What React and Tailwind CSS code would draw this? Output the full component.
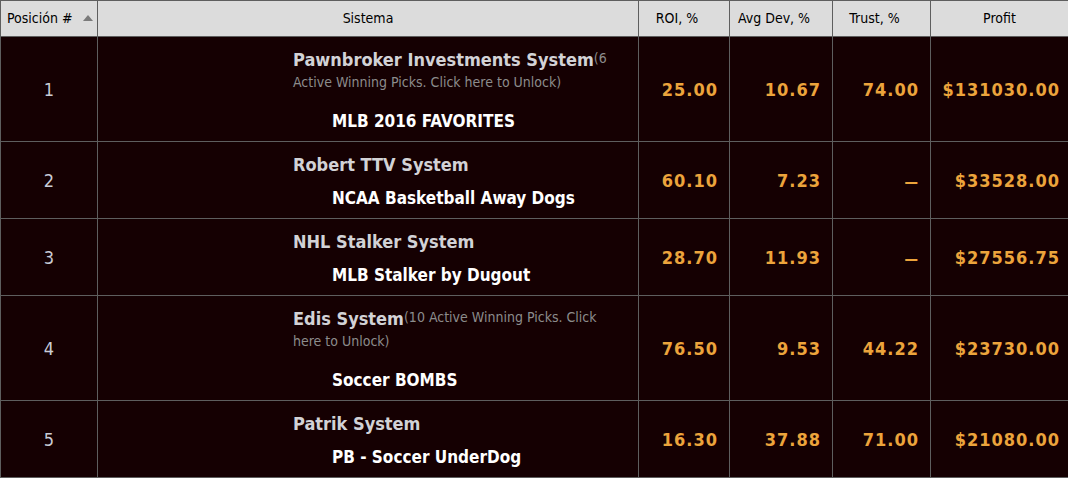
import React from "react";

const rows = [
  {
    pos: 1,
    name: "Pawnbroker Investments System",
    note: "(6 Active Winning Picks. Click here to Unlock)",
    sub: "MLB 2016 FAVORITES",
    roi: "25.00",
    dev: "10.67",
    trust: "74.00",
    profit: "$131030.00",
  },
  {
    pos: 2,
    name: "Robert TTV System",
    sub: "NCAA Basketball Away Dogs",
    roi: "60.10",
    dev: "7.23",
    trust: null,
    profit: "$33528.00",
  },
  {
    pos: 3,
    name: "NHL Stalker System",
    sub: "MLB Stalker by Dugout",
    roi: "28.70",
    dev: "11.93",
    trust: null,
    profit: "$27556.75",
  },
  {
    pos: 4,
    name: "Edis System",
    note: "(10 Active Winning Picks. Click here to Unlock)",
    sub: "Soccer BOMBS",
    roi: "76.50",
    dev: "9.53",
    trust: "44.22",
    profit: "$23730.00",
  },
  {
    pos: 5,
    name: "Patrik System",
    sub: "PB - Soccer UnderDog",
    roi: "16.30",
    dev: "37.88",
    trust: "71.00",
    profit: "$21080.00",
  },
];

const numCell = "border border-[#5e5e5e] text-right font-bold text-[#eca43c] tracking-[1px]";

export default function App() {
  return (
    <div
      className="w-[1068px] h-[478px] bg-[#150002] overflow-hidden"
      style={{ fontFamily: '"DejaVu Sans Condensed", "DejaVu Sans", sans-serif' }}
    >
      <table className="w-[1068px] border-collapse table-fixed">
        <colgroup>
          <col className="w-[97px]" />
          <col className="w-[541px]" />
          <col className="w-[91px]" />
          <col className="w-[103px]" />
          <col className="w-[98px]" />
          <col className="w-[138px]" />
        </colgroup>
        <thead>
          <tr className="h-[36px] bg-[#dcdcdc] text-[14px] text-black">
            <th className="border border-[#5e5e5e] text-left font-normal pl-[6px]">
              <span>Posición #</span>
              <span className="ml-[10px] inline-block align-middle w-0 h-0 border-l-[5px] border-r-[5px] border-b-[6px] border-l-transparent border-r-transparent border-b-[#7a7a7a] -mt-[3px]" />
            </th>
            <th className="border border-[#5e5e5e] font-normal">Sistema</th>
            <th className="border border-[#5e5e5e] font-normal pr-[14px]">ROI, %</th>
            <th className="border border-[#5e5e5e] font-normal pr-[14px]">Avg Dev, %</th>
            <th className="border border-[#5e5e5e] font-normal pr-[14px]">Trust, %</th>
            <th className="border border-[#5e5e5e] font-normal">Profit</th>
          </tr>
        </thead>
        <tbody>
          {rows.map((r) => (
            <tr key={r.pos} className="text-[18px]">
              <td className="border border-[#5e5e5e] text-center text-[#c9ccd6]">{r.pos}</td>
              <td className="border border-[#5e5e5e] pl-[195px] pr-[22px] pt-[11px] pb-[8px]">
                <div className="leading-[24px]">
                  <span className="font-bold text-[#d2d2d6]">{r.name}</span>
                  {r.note && (
                    <span className="text-[14px] leading-none align-[3px] text-[#8c8c8c]">{r.note}</span>
                  )}
                </div>
                <div
                  className={`${
                    r.note ? "mt-[13px]" : "mt-[9px]"
                  } pl-[39px] leading-[24px] text-[17px] font-bold text-white`}
                >
                  {r.sub}
                </div>
              </td>
              <td className={`${numCell} pr-[11px]`}>{r.roi}</td>
              <td className={`${numCell} pr-[11px]`}>{r.dev}</td>
              <td className={`${numCell} pr-[11px]`}>
                {r.trust ?? <span className="text-[15px]">—</span>}
              </td>
              <td className={`${numCell} pr-[8px]`}>{r.profit}</td>
            </tr>
          ))}
        </tbody>
      </table>
    </div>
  );
}
